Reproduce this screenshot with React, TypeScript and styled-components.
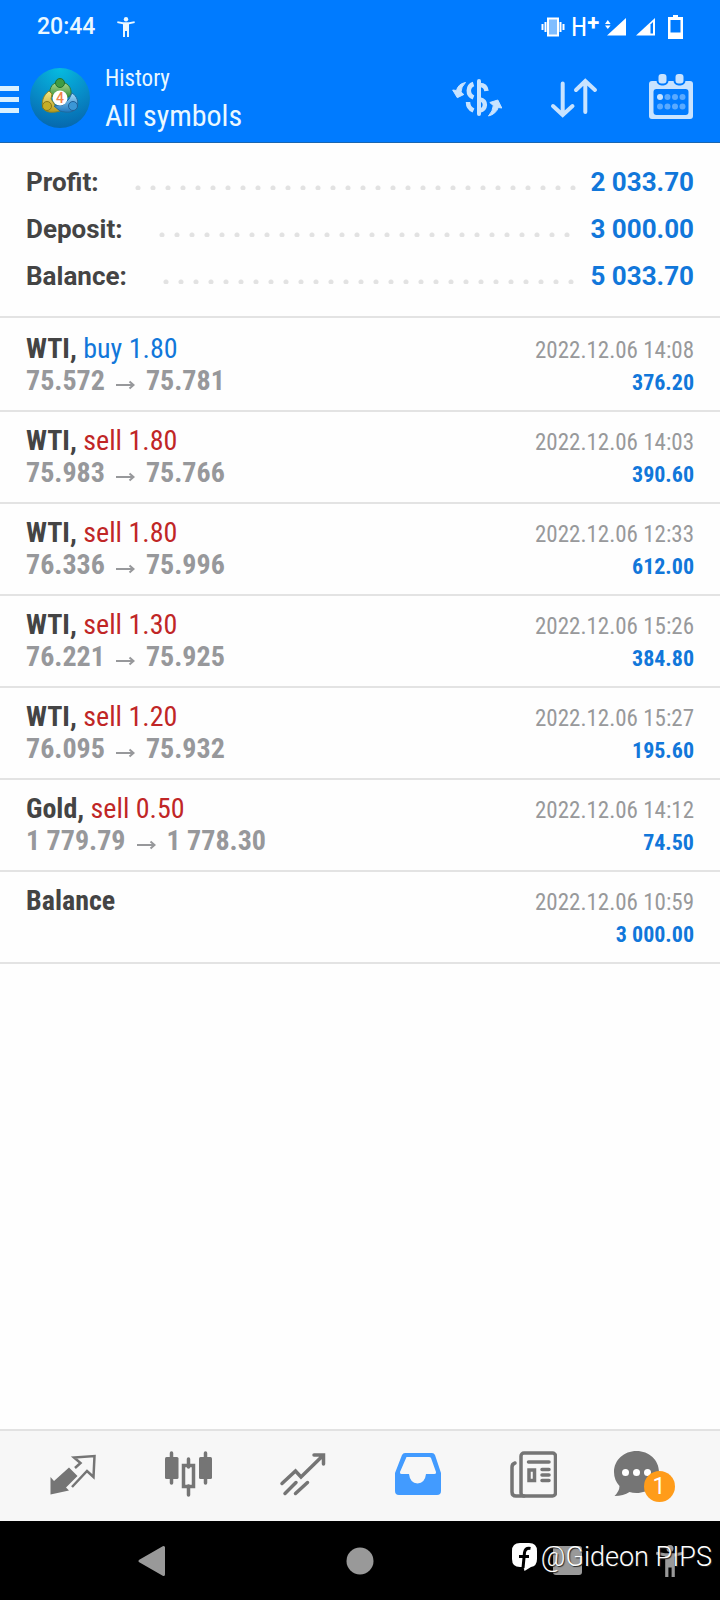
import React from "react";
import styled, { createGlobalStyle } from "styled-components";

const condensed = `"Roboto Condensed", "Liberation Sans Narrow", Roboto, sans-serif`;

const Global = createGlobalStyle`
  *, *::before, *::after { box-sizing: border-box; }
  body { margin: 0; background: #fefefe; font-family: Roboto, sans-serif; }
  button { border: 0; padding: 0; background: none; cursor: pointer; }
  svg { display: block; flex: none; }
  h1, p, dl, dd, dt, ul { margin: 0; padding: 0; font-weight: inherit; }
`;

const Screen = styled.div`
  min-height: 100vh;
  display: flex;
  flex-direction: column;
`;

const Top = styled.header`
  background: #007bff;
  border-bottom: 1px solid #1a66b0;
  color: #eaf8ff;
`;

const StatusBar = styled.div`
  display: flex;
  align-items: center;
  justify-content: space-between;
  height: 54px;
  padding: 0 31px 0 37px;
`;

const StatusGroup = styled.div<{ $gap: number }>`
  display: flex;
  align-items: center;
  gap: ${(p) => p.$gap}px;
`;

const Clock = styled.time`
  font-size: 23px;
  font-weight: 500;
  line-height: 28px;
`;

const Network = styled.span`
  display: flex;
  width: 28px;
  font-family: ${condensed};
  font-size: 26px;
  font-weight: 400;
  line-height: 28px;
  color: #fff;
  sup {
    font-family: Roboto, sans-serif;
    font-size: 22px;
    font-weight: 700;
    line-height: 20px;
  }
`;

const AppBar = styled.div`
  display: flex;
  align-items: center;
  height: 88px;
  padding-right: 24px;
`;

const MenuButton = styled.button`
  width: 30px;
  height: 60px;
`;

const Titles = styled.div`
  flex: 1;
  padding: 5px 0 0 15px;
  font-family: ${condensed};
`;

const Section = styled.p`
  font-size: 23px;
  line-height: 30px;
`;

const Title = styled.h1`
  font-size: 30px;
  line-height: 44px;
`;

const Actions = styled.div`
  display: flex;
  gap: 47px;
  color: #c8e3ff;
`;

const Summary = styled.dl`
  padding: 16px 26px;
  border-bottom: 2px solid #e3e3e3;
  font-size: 26px;
  line-height: 47px;
`;

const SummaryRow = styled.div`
  display: flex;
  align-items: center;
`;

const Label = styled.dt`
  font-weight: 700;
  color: #444;
`;

const Dots = styled.span`
  flex: 1;
  height: 5px;
  margin: 10px 14px 0 36px;
  background: radial-gradient(circle at 3px 3px, #e2e2e2 2px, transparent 3px) 0 0 / 15px 5px;
`;

const Amount = styled.dd`
  font-weight: 700;
  color: #1177da;
`;

const Deals = styled.ul`
  flex: 1;
  padding-top: 2px;
  list-style: none;
  font-family: ${condensed};
`;

const Deal = styled.li`
  display: flex;
  justify-content: space-between;
  height: 92px;
  padding: 13px 26px 0;
  border-bottom: 2px solid #e3e3e3;
`;

const DealLine = styled.div`
  font-size: 28px;
  line-height: 32px;
`;

const SymbolName = styled.b`
  color: #444;
`;

const Side = styled.span<{ $side: string }>`
  color: ${(p) => (p.$side === "buy" ? "#1177da" : "#c02626")};
`;

const Prices = styled(DealLine)`
  display: flex;
  align-items: center;
  gap: 11px;
  font-weight: 700;
  color: #97989b;
  svg { margin-top: 8px; }
`;

const Meta = styled.div`
  padding-top: 2px;
  text-align: right;
  font-size: 23px;
  line-height: 32px;
`;

const When = styled.div`
  color: #98999b;
`;

const Result = styled.div`
  font-size: 22px;
  font-weight: 700;
  color: #1177da;
`;

const Tabs = styled.nav`
  display: grid;
  grid-template-columns: repeat(6, 1fr);
  height: 92px;
  padding: 0 15px 4px;
  border-top: 2px solid #e2e2e2;
  background: #f7f7f7;
`;

const Tab = styled.button<{ $active?: boolean }>`
  display: flex;
  align-items: center;
  justify-content: center;
  color: ${(p) => (p.$active ? "#429bff" : "#757575")};
`;

const ChatIcon = styled.span`
  position: relative;
  width: 70px;
`;

const Badge = styled.span`
  position: absolute;
  left: 31px;
  top: 21px;
  width: 31px;
  height: 31px;
  border-radius: 50%;
  background: #ff9c1a;
  color: #fff;
  font: 400 23px/32px Roboto, sans-serif;
`;

const SystemNav = styled.div`
  position: relative;
  display: flex;
  align-items: center;
  gap: 72px;
  height: 79px;
  padding: 0 35px 0 135px;
  background: #000;
  color: #999;
`;

const NavKeys = styled.div`
  flex: 1;
  display: flex;
  align-items: center;
  justify-content: space-between;
`;

const IconButton = styled.button`
  color: inherit;
`;

const Watermark = styled.div`
  position: absolute;
  right: 8px;
  top: 20px;
  display: flex;
  align-items: center;
  gap: 4px;
  color: #fff;
  font-size: 27px;
  line-height: 32px;
  font-weight: 300;
  text-shadow: 1px 1px 1px #222;
`;

const Person = ({ w, h }: { w: number; h: number }) => (
  <svg width={w} height={h} viewBox="0 0 18 20" fill="currentColor" aria-hidden="true">
    <circle cx="9" cy="2.2" r="2.2" />
    <path d="M.5 4.2 6 5.2h6l5.500-1 .3 1.800L12 7.200V20h-2v-6H8v6H6V7.200L.2 6z" />
  </svg>
);

const Logo = () => (
  <svg width="60" height="60" viewBox="0 0 60 60" aria-hidden="true">
    <defs>
      <radialGradient id="sky" cx=".5" cy="0" r="1">
        <stop offset="0" stopColor="#06bce0" />
        <stop offset=".6" stopColor="#0789c6" />
        <stop offset="1" stopColor="#0668ae" />
      </radialGradient>
      <linearGradient id="green" x2="0" y2="1"><stop stopColor="#b2dc92" /><stop offset="1" stopColor="#2f8c35" /></linearGradient>
      <linearGradient id="gold" x2="0" y2="1"><stop stopColor="#f3e98a" /><stop offset="1" stopColor="#b99a1b" /></linearGradient>
      <linearGradient id="azure" x2="0" y2="1"><stop stopColor="#a5dcf8" /><stop offset="1" stopColor="#1f78c0" /></linearGradient>
    </defs>
    <circle cx="30" cy="30" r="30" fill="url(#sky)" />
    <path d="M20 27c-1-8 3-13 10-13s12 5 11 13l-4 3-6-5-7 4z" fill="url(#green)" stroke="#2b7c37" />
    <path d="M19 23c-6 4-8 12-6 17 3 5 10 5 17 3l-5-6-4-6 1-5z" fill="url(#gold)" stroke="#8f8420" />
    <path d="M42 25c5 3 7 9 5 14-3 6-10 6-17 4l-6-5 9-1 6-6z" fill="url(#azure)" stroke="#22699c" />
    <circle cx="30" cy="15" r="4.500" fill="#3f9c43" stroke="#226f2d" />
    <circle cx="17" cy="38" r="4.500" fill="#c5ae28" stroke="#877719" />
    <circle cx="43" cy="38" r="4.500" fill="#3b97d6" stroke="#205f97" />
    <circle cx="30" cy="30" r="7.500" fill="#fff" />
    <text x="30" y="35" textAnchor="middle" fontFamily="Roboto" fontSize="14" fontWeight="500" fill="#f0844a">4</text>
  </svg>
);

const Arrow = () => (
  <svg width="19" height="10" viewBox="0 0 19 10" fill="none" stroke="currentColor" strokeWidth="2" aria-hidden="true">
    <path d="M0 5h17M13.500 1.500 17.500 5l-4 3.500" />
  </svg>
);

const totals = [
  ["Profit:", "2 033.70"],
  ["Deposit:", "3 000.00"],
  ["Balance:", "5 033.70"],
];

const deals = [
  { symbol: "WTI", side: "buy", volume: "1.80", open: "75.572", close: "75.781", when: "2022.12.06 14:08", result: "376.20" },
  { symbol: "WTI", side: "sell", volume: "1.80", open: "75.983", close: "75.766", when: "2022.12.06 14:03", result: "390.60" },
  { symbol: "WTI", side: "sell", volume: "1.80", open: "76.336", close: "75.996", when: "2022.12.06 12:33", result: "612.00" },
  { symbol: "WTI", side: "sell", volume: "1.30", open: "76.221", close: "75.925", when: "2022.12.06 15:26", result: "384.80" },
  { symbol: "WTI", side: "sell", volume: "1.20", open: "76.095", close: "75.932", when: "2022.12.06 15:27", result: "195.60" },
  { symbol: "Gold", side: "sell", volume: "0.50", open: "1 779.79", close: "1 778.30", when: "2022.12.06 14:12", result: "74.50" },
  { symbol: "Balance", when: "2022.12.06 10:59", result: "3 000.00" },
];

export default function App() {
  return (
    <Screen>
      <Global />
      <Top>
        <StatusBar>
          <StatusGroup $gap={22}>
            <Clock>20:44</Clock>
            <Person w={18} h={20} />
          </StatusGroup>
          <StatusGroup $gap={6}>
            <svg width="24" height="24" viewBox="0 0 24 24" aria-hidden="true">
              <path d="M1.500 9v6M4.500 7v10M19.500 7v10M22.500 9v6" stroke="#fff" strokeWidth="2" />
              <rect x="7" y="3.500" width="10" height="17" fill="#7fbdff" stroke="#fff" strokeWidth="2" />
            </svg>
            <Network>H<sup>+</sup></Network>
            <svg width="24" height="24" viewBox="0 0 24 24" fill="#fff" aria-hidden="true">
              <path d="M21 3v17.500H2zM0 9l2.800-4L5.600 9zM0 10.500h5.600L2.800 14z" />
            </svg>
            <svg width="24" height="24" viewBox="0 0 24 24" aria-hidden="true">
              <path d="M20 3v17.500H1z" fill="#fff" />
              <path d="M15.500 9.500 18 7v11.500h-2.500z" fill="#007bff" />
            </svg>
            <svg width="24" height="24" viewBox="0 0 24 24" aria-hidden="true">
              <path d="M8 0h5v2h5v22H3V2h5z" fill="#fff" />
              <path d="M5.500 5h10v12.500h-10z" fill="#007bff" />
            </svg>
          </StatusGroup>
        </StatusBar>
        <AppBar>
          <MenuButton aria-label="Menu">
            <svg width="19" height="60" viewBox="0 0 19 60" fill="#d9f1ff" aria-hidden="true">
              <path d="M0 18h19v5H0zM0 29h19v5H0zM0 40h19v5H0z" />
            </svg>
          </MenuButton>
          <Logo />
          <Titles>
            <Section>History</Section>
            <Title>All symbols</Title>
          </Titles>
          <Actions>
            <IconButton aria-label="Currency">
              <svg width="50" height="50" viewBox="0 0 50 50" fill="none" stroke="currentColor" strokeWidth="4" aria-hidden="true">
                <path d="M27 8v33" strokeLinecap="round" />
                <path d="M21.500 11c-6 2-6.500 11 0 13.500M28 12c4 0 6 2 6.500 6M28 26.500c7 1 6 10 0 11M16 29c0 4 2 7 5.500 8.500" strokeWidth="4.500" />
                <path d="M13.500 9.500Q6 11 4.500 17.500L.7 17l4.600 7.700 6.500-3.200-2.800-2.500Q9 14 13.500 9.500zM36.500 43Q44 41 46.300 34.500l3.500.5L45.800 27l-8 2.500 3.500 3Q41 38 36.500 43z" fill="currentColor" strokeWidth="1" strokeLinejoin="round" />
              </svg>
            </IconButton>
            <IconButton aria-label="Sort">
              <svg width="50" height="50" viewBox="0 0 50 50" fill="none" stroke="currentColor" strokeWidth="4" strokeLinecap="round" aria-hidden="true">
                <path d="M13.700 10.500v31M4 33l9.700 9L23.500 33M36.300 39V8M27 17l9.300-9 9.700 9" />
              </svg>
            </IconButton>
            <IconButton aria-label="Calendar">
              <svg width="50" height="50" viewBox="0 0 50 50" fill="currentColor" aria-hidden="true">
                <rect x="3" y="8" width="44" height="38" rx="3" />
                <g stroke="#007bff" strokeWidth="2">
                  <rect x="11.500" y="0" width="10" height="11.500" rx="4" />
                  <rect x="28.500" y="0" width="10" height="11.500" rx="4" />
                </g>
                <rect x="7.500" y="16" width="35" height="26" rx="3" fill="#007bff" />
                <circle cx="14" cy="24" r="3" />
                <g opacity=".45">
                  <circle cx="21.500" cy="24" r="3" /><circle cx="29" cy="24" r="3" /><circle cx="36.500" cy="24" r="3" />
                  <circle cx="14" cy="33.500" r="3" /><circle cx="21.500" cy="33.500" r="3" /><circle cx="29" cy="33.500" r="3" /><circle cx="36.500" cy="33.500" r="3" />
                </g>
              </svg>
            </IconButton>
          </Actions>
        </AppBar>
      </Top>

      <Summary>
        {totals.map(([label, value]) => (
          <SummaryRow key={label}>
            <Label>{label}</Label>
            <Dots />
            <Amount>{value}</Amount>
          </SummaryRow>
        ))}
      </Summary>

      <Deals>
        {deals.map((d) => (
          <Deal key={d.when}>
            <div>
              <DealLine>
                <SymbolName>{d.symbol}{d.side && ","}</SymbolName>
                {d.side && <Side $side={d.side}> {d.side} {d.volume}</Side>}
              </DealLine>
              {d.open && (
                <Prices><span>{d.open}</span><Arrow /><span>{d.close}</span></Prices>
              )}
            </div>
            <Meta>
              <When>{d.when}</When>
              <Result>{d.result}</Result>
            </Meta>
          </Deal>
        ))}
      </Deals>

      <Tabs>
        <Tab aria-label="Quotes">
          <svg width="48" height="48" viewBox="0 0 48 48" aria-hidden="true">
            <path d="M20 17.500 28.500 26 17 37.500l3 3L1.500 44.500V27l3.500 4z" fill="currentColor" />
            <path d="M26 18l5.500-5-6.500-5.500 20.500-1.500-1 21-6.500-6L23 37" fill="none" stroke="currentColor" strokeWidth="2.500" />
          </svg>
        </Tab>
        <Tab aria-label="Chart">
          <svg width="48" height="48" viewBox="0 0 48 48" fill="currentColor" aria-hidden="true">
            <path d="M7.500 3v30M41.500 3v30M24.500 9v8M24.500 36v9" stroke="currentColor" strokeWidth="3.500" strokeLinecap="round" />
            <rect x="1" y="7" width="13.500" height="22" rx="1.500" />
            <rect x="35" y="7" width="13" height="22" rx="1.500" />
            <rect x="19.500" y="15.500" width="10" height="21" fill="none" stroke="currentColor" strokeWidth="3.500" />
          </svg>
        </Tab>
        <Tab aria-label="Trade">
          <svg width="48" height="48" viewBox="0 0 48 48" fill="none" stroke="currentColor" strokeWidth="3.500" strokeLinecap="round" aria-hidden="true">
            <path d="M3 33.500 16.500 21l5.500 6L44 5.500M35 5h9.500v9M6 43.500 17 32.500M16.500 43.500 28.500 32.500" />
          </svg>
        </Tab>
        <Tab aria-label="History" aria-current="page" $active>
          <svg width="48" height="48" viewBox="0 0 48 48" fill="currentColor" fillRule="evenodd" aria-hidden="true">
            <path d="M11 3h27q2 0 3 2l6 18v18q0 4-4 4H5q-4 0-4-4V23L8 5q1-2 3-2zm1.500 4L6 22q-.5 2 1.500 2H15q1 9 8.500 9.500Q31 33 32 24h8.500q2 0 1.500-2L37 8q-.5-1-2-1z" />
          </svg>
        </Tab>
        <Tab aria-label="News">
          <svg width="48" height="48" viewBox="0 0 48 48" fill="none" stroke="currentColor" strokeWidth="3.500" strokeLinecap="round" aria-hidden="true">
            <rect x="12" y="3" width="34.500" height="43" rx="3" />
            <path d="M6 13q-3 1-3 4v25q0 4 4 4h8M19.500 12H40M33 19.500h7M33 25h7M33 30.500h7" />
            <rect x="20" y="20" width="5.500" height="10.500" />
          </svg>
        </Tab>
        <Tab aria-label="Messages, 1 unread">
          <ChatIcon>
            <svg width="48" height="48" viewBox="0 0 48 48" aria-hidden="true">
              <path d="M23.500 1C36 1 46 10 46 22S36 43 23.500 43q-4 0-7-1-6 4-15 4 5-5 5-10Q1 30 1 22C1 10 11 1 23.500 1z" fill="currentColor" />
              <circle cx="12.500" cy="22.500" r="3.500" fill="#fff" /><circle cx="23.500" cy="22.500" r="3.500" fill="#fff" /><circle cx="34.500" cy="22.500" r="3.500" fill="#fff" />
            </svg>
            <Badge>1</Badge>
          </ChatIcon>
        </Tab>
      </Tabs>

      <SystemNav>
        <NavKeys>
          <IconButton aria-label="Back">
            <svg width="32" height="32" viewBox="0 0 32 32" aria-hidden="true">
              <path d="M5 16 28.500 2.500v27z" fill="currentColor" stroke="currentColor" strokeWidth="3" strokeLinejoin="round" />
            </svg>
          </IconButton>
          <IconButton aria-label="Home">
            <svg width="28" height="28" viewBox="0 0 28 28" aria-hidden="true"><circle cx="14" cy="14" r="13.500" fill="currentColor" /></svg>
          </IconButton>
          <IconButton aria-label="Recent apps">
            <svg width="30" height="30" viewBox="0 0 30 30" aria-hidden="true"><rect width="29" height="29" rx="3" fill="currentColor" /></svg>
          </IconButton>
        </NavKeys>
        <IconButton aria-label="Accessibility"><Person w={30} h={32} /></IconButton>
        <Watermark>
          <svg width="25" height="30" viewBox="0 0 25 30" aria-hidden="true">
            <path d="M8 1h9q8 0 8 8v8q0 7-6 8l-6.500 4-1-4H8q-8 0-8-8V9q0-8 8-8z" fill="#fff" />
            <path d="M18.500 6.500q-5-1-6 4L11 26M7 14.500h10" stroke="#000" strokeWidth="3" fill="none" />
          </svg>
          @Gideon PIPS
        </Watermark>
      </SystemNav>
    </Screen>
  );
}
